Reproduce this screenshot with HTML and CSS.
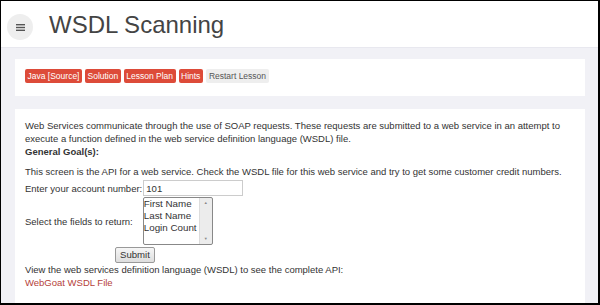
FILE: index.html
```html
<!DOCTYPE html>
<html lang="en">
<head>
  <meta charset="UTF-8" />
  <title>WSDL Scanning</title>
  <link rel="stylesheet" href="styles.css">
</head>
<body>
  <div class="frame">
    <!-- Page header -->
    <div class="header">
      <button class="menu-btn" aria-label="Menu">
        <svg width="9" height="7" viewBox="0 0 9 7">
          <rect x="0" y="0" width="9" height="1.4" fill="#555"/>
          <rect x="0" y="2.8" width="9" height="1.4" fill="#555"/>
          <rect x="0" y="5.6" width="9" height="1.4" fill="#555"/>
        </svg>
      </button>
      <h1 class="title">WSDL Scanning</h1>
    </div>
    <div class="main">
      <!-- Lesson toolbar -->
      <div class="card toolbar">
        <a class="tag" href="#">Java [Source]</a>
        <a class="tag" href="#">Solution</a>
        <a class="tag" href="#">Lesson Plan</a>
        <a class="tag" href="#">Hints</a>
        <a class="tag tag-plain" href="#">Restart Lesson</a>
      </div>
      <!-- Lesson content -->
      <div class="card lesson">
        <p>Web Services communicate through the use of SOAP requests. These requests are submitted to a web service in an attempt to execute a function defined in the web service definition language (WSDL) file.</p>
        <p class="goal">General Goal(s):</p>
        <p class="intro">This screen is the API for a web service. Check the WSDL file for this web service and try to get some customer credit numbers.</p>
        <form class="api-form" onsubmit="return false">
          <div class="row">
            <label for="account">Enter your account number:</label>
            <input id="account" type="text" value="101" />
          </div>
          <div class="row">
            <label for="fields">Select the fields to return:</label>
            <span class="select-wrap">
              <select id="fields" multiple size="4">
                <option>First Name</option>
                <option>Last Name</option>
                <option>Login Count</option>
              </select>
            </span>
          </div>
          <div class="submit-row">
            <button type="submit">Submit</button>
          </div>
        </form>
        <p>View the web services definition language (WSDL) to see the complete API:</p>
        <a class="wsdl-link" href="#">WebGoat WSDL File</a>
      </div>
    </div>
  </div>
</body>
</html>
```

FILE: styles.css
```css
* {
  margin: 0;
  padding: 0;
  box-sizing: border-box;
}
body {
  font-family: 'Liberation Sans', Arial, sans-serif;
  color: #333;
  background: #fff;
}
.frame {
  width: 600px;
  height: 305px;
  border: 1px solid #000;
  border-bottom-width: 2px;
  border-right-width: 2px;
  overflow: hidden;
  display: flex;
  flex-direction: column;
}
/* Header */
.header {
  flex-shrink: 0;
  height: 47px;
  background: #fff;
  display: flex;
  align-items: center;
  border-bottom: 1px solid #e8e8ef;
}
.menu-btn {
  width: 26px;
  height: 26px;
  border-radius: 50%;
  border: none;
  background: #eeeeee;
  margin-left: 6px;
  margin-top: 6px;
  display: flex;
  align-items: center;
  justify-content: center;
}
.title {
  font-size: 24px;
  font-weight: 400;
  color: #444;
  margin-left: 16px;
  margin-top: 2px;
}
/* Main area */
.main {
  flex: 1;
  background: #f1f1f6;
  padding: 11px 13px 0 14px;
  display: flex;
  flex-direction: column;
  gap: 13px;
}
.card {
  background: #fff;
}
.toolbar {
  flex-shrink: 0;
  display: flex;
  gap: 3px;
  padding: 10px 10px 13px;
}
.tag {
  font-size: 8.5px;
  line-height: 14px;
  padding: 0 2.5px;
  border-radius: 2px;
  background: #dd4b39;
  color: #fff;
  text-decoration: none;
}
.tag-plain {
  background: #eeeeee;
  color: #555;
  padding: 0 3px;
}
.lesson {
  flex: 1;
  padding: 10px 10px;
  font-size: 9.5px;
  line-height: 13px;
}
.goal {
  font-weight: 700;
}
.intro {
  margin-top: 7px;
}
.row {
  display: flex;
  align-items: center;
  margin-top: 1px;
}
.row:first-child {
  margin-top: 2px;
}
.row input {
  width: 100px;
  height: 16px;
  border: 1px solid #ccc;
  font-family: inherit;
  font-size: 9.6px;
  color: #333;
  padding: 0 2px;
  margin-left: 1px;
}
/* Listbox with a classic scrollbar */
.select-wrap {
  position: relative;
  margin-left: 10px;
  display: flex;
}
.row select {
  width: 70px;
  height: 48px;
  border: 1px solid #888;
  font-family: inherit;
  font-size: 9.8px;
  color: #333;
  outline: none;
  background: linear-gradient(to left, #ececec 12px, #dcdcdc 12px, #dcdcdc 13px, #fff 13px);
}
.select-wrap::before,
.select-wrap::after {
  position: absolute;
  right: 1px;
  width: 12px;
  text-align: center;
  font-size: 4px;
  color: #888;
  line-height: 10px;
}
.select-wrap::before {
  content: "\25B2";
  top: 1px;
}
.select-wrap::after {
  content: "\25BC";
  bottom: 1px;
}
.submit-row {
  padding-left: 90px;
  margin-top: 2px;
  line-height: 0;
}
.submit-row button {
  font-family: inherit;
  font-size: 9.6px;
  line-height: 12px;
  padding: 1px 4px;
  border: 1px solid #999;
  border-radius: 2px;
  background: linear-gradient(#f6f6f6, #dedede);
  color: #333;
}
.wsdl-link {
  color: #b5413a;
  text-decoration: none;
}
```
